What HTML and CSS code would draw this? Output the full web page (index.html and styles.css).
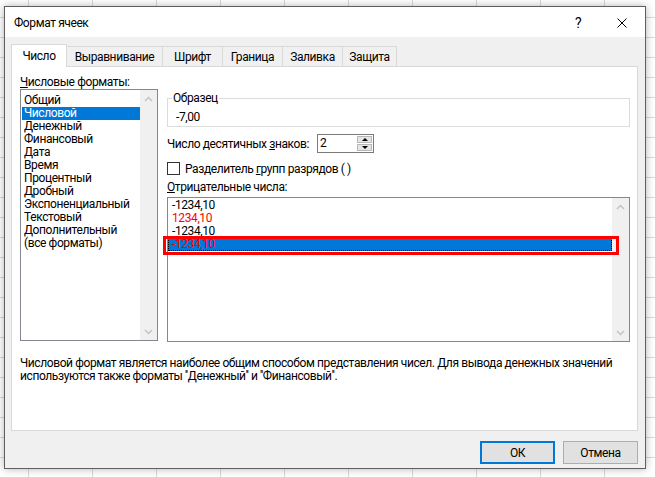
FILE: index.html
```html
<!DOCTYPE html>
<html lang="ru">
<head>
<meta charset="utf-8">
<title>Формат ячеек</title>
<link rel="stylesheet" href="styles.css">
</head>
<body>
<div class="desk">
  <div class="dialog">
    <div class="titlebar">
      <span class="title">Формат ячеек</span>
      <span class="tb-btn help">?</span>
      <span class="tb-btn close"><svg width="10" height="10" viewBox="0 0 10 10"><path d="M0.5 0.5L9.5 9.5M9.5 0.5L0.5 9.5" stroke="#000" stroke-width="1" fill="none"/></svg></span>
    </div>
    <div class="body">
      <div class="tabs">
        <div class="tab active w-num">Число</div>
        <div class="tab w-align">Выравнивание</div>
        <div class="tab w-font">Шрифт</div>
        <div class="tab w-border">Граница</div>
        <div class="tab w-fill">Заливка</div>
        <div class="tab w-prot">Защита</div>
      </div>
      <div class="panel">
        <div class="cols">
          <div class="left">
            <div class="label"><u>Ч</u>исловые форматы:</div>
            <div class="listbox fmt">
              <ul class="items">
                <li>Общий</li>
                <li class="sel">Числовой</li>
                <li>Денежный</li>
                <li>Финансовый</li>
                <li>Дата</li>
                <li>Время</li>
                <li>Процентный</li>
                <li>Дробный</li>
                <li>Экспоненциальный</li>
                <li>Текстовый</li>
                <li>Дополнительный</li>
                <li>(все форматы)</li>
              </ul>
              <div class="vscroll">
                <span class="arrow"><svg width="9" height="6" viewBox="0 0 9 6"><path d="M1 5L4.5 1.5L8 5" fill="none" stroke="#c4c4c4" stroke-width="1.5"/></svg></span>
                <span class="arrow"><svg width="9" height="6" viewBox="0 0 9 6"><path d="M1 1L4.5 4.5L8 1" fill="none" stroke="#c4c4c4" stroke-width="1.5"/></svg></span>
              </div>
            </div>
          </div>
          <div class="right">
            <fieldset class="sample">
              <legend>Образец</legend>
              <div class="sample-val">-7,00</div>
            </fieldset>
            <div class="spin-row">
              <span class="spin-label">Число десятичных <u>з</u>наков:</span>
              <div class="spin">
                <span class="spin-val">2</span>
                <div class="spin-btns">
                  <span class="sb up"></span>
                  <span class="sb down"></span>
                </div>
              </div>
            </div>
            <div class="check-row">
              <span class="checkbox"></span>
              <span>Разделитель <u>г</u>рупп разрядов ( )</span>
            </div>
            <div class="label neg-label"><u>О</u>трицательные числа:</div>
            <div class="listbox neg">
              <ul class="items">
                <li>-1234,10</li>
                <li class="red">1234,10</li>
                <li>-1234,10</li>
                <li class="sel red">-1234,10</li>
              </ul>
              <div class="vscroll">
                <span class="arrow"><svg width="9" height="6" viewBox="0 0 9 6"><path d="M1 5L4.5 1.5L8 5" fill="none" stroke="#c4c4c4" stroke-width="1.5"/></svg></span>
                <span class="arrow"><svg width="9" height="6" viewBox="0 0 9 6"><path d="M1 1L4.5 4.5L8 1" fill="none" stroke="#c4c4c4" stroke-width="1.5"/></svg></span>
              </div>
              <div class="mark"></div>
            </div>
          </div>
        </div>
        <p class="desc">Числовой формат является наиболее общим способом представления чисел. Для вывода денежных значений<br>используются также форматы ''Денежный'' и ''Финансовый''.</p>
      </div>
      <div class="buttons">
        <button class="btn default">ОК</button>
        <button class="btn">Отмена</button>
      </div>
    </div>
  </div>
</div>
</body>
</html>
```
FILE: styles.css
```css
* { box-sizing: border-box; }

html, body { margin: 0; padding: 0; }

body {
  width: 655px;
  height: 478px;
  overflow: hidden;
  font-family: Roboto, "Liberation Sans", sans-serif;
  font-size: 12px;
  letter-spacing: -0.4px;
  color: #000;
  background-color: #fff;
  background-image:
    linear-gradient(#d9d9d9 1px, transparent 1px),
    linear-gradient(90deg, #d9d9d9 1px, transparent 1px);
  background-size: 64px 20px;
  background-position: 28px 17px;
}

.desk { padding: 6px 0 0 4px; }

.dialog {
  width: 642px;
  height: 463px;
  border: 1px solid #5f5f5f;
  background: #f0f0f0;
  box-shadow: 0 0 8px rgba(0, 0, 0, 0.3);
  display: flex;
  flex-direction: column;
}

.titlebar {
  flex: none;
  height: 30px;
  padding-top: 1px;
  background: #fff;
  display: flex;
  align-items: center;
  padding-left: 9px;
}

.title { flex: 1; }

.tb-btn {
  width: 46px;
  height: 29px;
  display: flex;
  align-items: center;
  justify-content: center;
}

.help { font-size: 14px; padding-left: 4px; }

.body {
  flex: 1;
  padding: 7px 7px 0 6px;
  display: flex;
  flex-direction: column;
}

.tabs {
  display: flex;
  align-items: flex-end;
  height: 22px;
}

.tab {
  height: 20px;
  padding-top: 1px;
  line-height: 18px;
  border: 1px solid #d9d9d9;
  border-bottom: none;
  text-align: center;
  margin-right: -1px;
  white-space: nowrap;
}

.tab.active {
  height: 23px;
  line-height: 21px;
  background: #fff;
  margin-bottom: -1px;
  position: relative;
  z-index: 1;
}

.w-num { width: 56px; }
.w-align { width: 97px; }
.w-font { width: 61px; }
.w-border { width: 61px; }
.w-fill { width: 61px; }
.w-prot { width: 55px; }

.panel {
  flex: none;
  height: 365px;
  background: #fff;
  border: 1px solid #d9d9d9;
  padding: 8px 7px 0 8px;
}

.cols {
  display: flex;
  gap: 9px;
  align-items: flex-start;
}

.left { width: 138px; flex: none; }
.right { width: 463px; flex: none; padding-top: 16px; }

.label { height: 14px; line-height: 14px; white-space: nowrap; }

.listbox {
  position: relative;
  display: flex;
  border: 1px solid #828790;
  background: #fff;
}

.fmt { height: 252px; }
.neg { height: 145px; margin-top: 3px; }

.items {
  list-style: none;
  margin: 0;
  flex: 1;
  min-width: 0;
}

.items li {
  height: 13px;
  line-height: 13px;
  padding-left: 2px;
  white-space: nowrap;
}

.fmt .items { padding: 4px 0 0 1px; }
.fmt .sel { background: #0078d7; color: #fff; }

.neg .items { padding: 1px 0 0 0; }
.neg .items li { padding-left: 4px; }
.neg .sel {
  background: #0078d7;
  outline: 1px dotted #000;
  outline-offset: -1px;
}

.red { color: #f00; }

.vscroll {
  width: 17px;
  flex: none;
  background: #f0f0f0;
  display: flex;
  flex-direction: column;
  justify-content: space-between;
}

.arrow {
  height: 17px;
  display: flex;
  align-items: center;
  justify-content: center;
}

.mark {
  position: absolute;
  left: -5px;
  top: 38px;
  width: 456px;
  height: 19px;
  border: 3px solid #f00;
}

.sample {
  margin: 0;
  padding: 0 0 2px 8px;
  border: 1px solid #dcdcdc;
  min-width: 0;
}

.sample legend {
  padding: 0 1px;
  margin-left: -4px;
  line-height: 14px;
}

.sample-val { line-height: 14px; margin-top: 5px; }

.spin-row {
  display: flex;
  align-items: center;
  height: 19px;
  margin-top: 7px;
}

.spin-label { width: 150px; white-space: nowrap; }

.spin {
  width: 57px;
  height: 19px;
  border: 1px solid #7a7a7a;
  background: #fff;
  display: flex;
}

.spin-val { flex: 1; padding-left: 2px; line-height: 17px; }

.spin-btns {
  width: 16px;
  display: flex;
  flex-direction: column;
  gap: 1px;
  padding: 1px 1px 1px 0;
}

.sb {
  flex: 1;
  background: #e5e5e5;
  border: 1px solid #b8b8b8;
  display: flex;
  align-items: center;
  justify-content: center;
}

.sb.up::after {
  content: "";
  border-left: 3px solid transparent;
  border-right: 3px solid transparent;
  border-bottom: 3px solid #000;
}

.sb.down::after {
  content: "";
  border-left: 3px solid transparent;
  border-right: 3px solid transparent;
  border-top: 3px solid #000;
}

.check-row {
  display: flex;
  align-items: center;
  gap: 5px;
  height: 13px;
  margin-top: 9px;
  white-space: nowrap;
}

.checkbox {
  width: 13px;
  height: 13px;
  border: 1px solid #333;
  background: #fff;
  flex: none;
}

.neg-label { margin-top: 5px; }

.desc {
  margin: 15px 0 0;
  line-height: 13px;
  white-space: nowrap;
}

.buttons {
  display: flex;
  justify-content: flex-end;
  gap: 8px;
  margin-top: 10px;
}

.btn {
  width: 75px;
  height: 23px;
  padding: 0;
  font: inherit;
  letter-spacing: inherit;
  color: #000;
  background: #e1e1e1;
  border: 1px solid #adadad;
}

.btn.default { border: 2px solid #0078d7; }
```
